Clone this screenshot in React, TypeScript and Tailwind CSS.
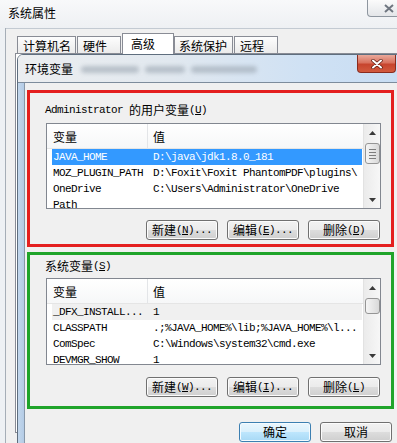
import React from "react";

const mono = "font-['Liberation_Mono',monospace] text-[11px] tracking-[-0.6px] whitespace-pre";

function Key({ k }: { k: string }) {
  return (
    <span className={mono}>
      (<span className="underline underline-offset-[1px]">{k}</span>)
    </span>
  );
}

function Btn({ zh, k, dots, def }: { zh: string; k?: string; dots?: boolean; def?: boolean }) {
  return (
    <div
      className={
        def
          ? "flex h-[20px] w-[72px] items-center justify-center rounded-[3px] border border-[#3c7fb1] bg-[linear-gradient(#eaf6fd_0%,#d9f0fc_50%,#bee6fd_50%,#a7d9f5_100%)] leading-[16px] shadow-[inset_0_0_0_1px_#f4fbff]"
          : "flex h-[20px] w-[72px] items-center justify-center rounded-[3px] border border-[#707070] bg-[linear-gradient(#f2f2f2_0%,#ebebeb_50%,#dddddd_50%,#cfcfcf_100%)] leading-[16px] shadow-[inset_0_0_0_1px_#fcfcfc]"
      }
    >
      <span>{zh}</span>
      {k && <Key k={k} />}
      {dots && <span className={mono}>...</span>}
    </div>
  );
}

function Arrow({ down }: { down?: boolean }) {
  return (
    <div className="flex h-[17px] items-center justify-center">
      <svg width="7" height="4" viewBox="0 0 7 4">
        <path d={down ? "M0 0 L7 0 L3.5 4 Z" : "M0 4 L3.5 0 L7 4 Z"} fill="#3a3a3a" />
      </svg>
    </div>
  );
}

function ScrollBar({ big }: { big?: boolean }) {
  return (
    <div className="flex w-[17px] flex-col border-l border-[#e2e2e2] bg-gradient-to-r from-[#ebebeb] to-[#f7f7f7]">
      <Arrow />
      <div
        className={
          big
            ? "mx-auto mt-[2px] flex h-[21px] w-[15px] flex-col items-center justify-center gap-[2px] rounded-[3px] border border-[#959595] bg-gradient-to-r from-[#f5f5f5] to-[#d9d9d9]"
            : "mx-auto mt-[2px] h-[16px] w-[15px] rounded-[3px] border border-[#959595] bg-gradient-to-r from-[#f5f5f5] to-[#d9d9d9]"
        }
      >
        {big && (
          <>
            <div className="h-px w-[7px] bg-[#7d7d7d]" />
            <div className="h-px w-[7px] bg-[#7d7d7d]" />
            <div className="h-px w-[7px] bg-[#7d7d7d]" />
            <div className="h-px w-[7px] bg-[#7d7d7d]" />
          </>
        )}
      </div>
      <div className="flex-1" />
      <Arrow down />
    </div>
  );
}

type Row = { name: string; value: string };

function ListView({ rows, user }: { rows: Row[]; user?: boolean }) {
  return (
    <div
      className={
        user
          ? "ml-px flex h-[86px] w-[335px] border border-[#828790] bg-white"
          : "ml-px flex h-[87px] w-[335px] border border-[#828790] bg-white"
      }
    >
      <div className="flex-1 overflow-hidden">
        <div className="flex h-[25px] border-b border-[#e5e5e5] bg-gradient-to-b from-white to-[#f6f7f8] pl-[5px] leading-[16px]">
          <div className="w-[96px] border-r border-[#e3e5e8] pl-px pt-[5px]">变量</div>
          <div className="pl-[5px] pt-[5px]">值</div>
        </div>
        {rows.map((r, i) => (
          <div
            key={r.name}
            className={
              user && i === 0
                ? "ml-[5px] flex h-[16px] w-[310px] items-center bg-[#3399ff] text-white"
                : !user && i === 0
                  ? "ml-[5px] flex h-[16px] w-[310px] items-center bg-[#f0f0f0]"
                  : "ml-[5px] flex h-[16px] w-[310px] items-center"
            }
          >
            <div className={"w-[100px] pl-px leading-[16px] " + mono}>{r.name}</div>
            <div className={"pl-px leading-[16px] " + mono}>{r.value}</div>
          </div>
        ))}
      </div>
      <ScrollBar big={user} />
    </div>
  );
}

const userRows: Row[] = [
  { name: "JAVA_HOME", value: "D:\\java\\jdk1.8.0_181" },
  { name: "MOZ_PLUGIN_PATH", value: "D:\\Foxit\\Foxit PhantomPDF\\plugins\\" },
  { name: "OneDrive", value: "C:\\Users\\Administrator\\OneDrive" },
  { name: "Path", value: "" },
];

const sysRows: Row[] = [
  { name: "_DFX_INSTALL...", value: "1" },
  { name: "CLASSPATH", value: ".;%JAVA_HOME%\\lib;%JAVA_HOME%\\l..." },
  { name: "ComSpec", value: "C:\\Windows\\system32\\cmd.exe" },
  { name: "DEVMGR_SHOW", value: "1" },
];

export default function App() {
  return (
    <div className="relative h-[443px] w-[397px] overflow-hidden bg-[#f0f0f0] font-['Noto_Sans_CJK_SC','Noto_Sans',sans-serif] text-[12px] text-black">
      {/* 系统属性 window */}
      <div className="w-[411px]">
        <div className="flex h-[28px] bg-gradient-to-b from-[#f8f9fa] to-[#eef0f3]">
          <div className="pl-[8px] pt-[5px] leading-[16px]">系统属性</div>
          <div className="ml-auto mr-px flex h-[17px] w-[43px] items-center justify-center rounded-b-[4px] border border-t-0 border-[#8e969f] bg-gradient-to-b from-[#fbfbfb] to-[#e4e6e9]">
            <svg width="10" height="9" viewBox="0 0 10 9">
              <path d="M1 1 L9 8 M9 1 L1 8" stroke="#6f7680" strokeWidth="2" />
            </svg>
          </div>
        </div>
        <div className="flex h-[415px]">
          <div className="w-[6px] border-r border-[#a6aeb7] bg-[#eef1f4]" />
          <div className="flex-1 border-t border-[#c3cad2] bg-[#f0f0f0] pl-[9px] pt-[4px]">
            <div className="flex h-[20px] items-end pl-[2px] leading-[16px]">
              <div className="h-[17px] w-[59px] border border-b-0 border-[#898c95] bg-gradient-to-b from-[#fdfdfd] to-[#ebebeb] pl-[5px] pt-px">计算机名</div>
              <div className="ml-px h-[17px] w-[44px] border border-b-0 border-[#898c95] bg-gradient-to-b from-[#fdfdfd] to-[#ebebeb] pl-[5px] pt-px">硬件</div>
              <div className="relative z-10 -mb-px ml-px h-[21px] w-[52px] border border-b-0 border-[#898c95] bg-white pl-[8px] pt-[2px]">高级</div>
              <div className="h-[17px] w-[59px] border border-b-0 border-[#898c95] bg-gradient-to-b from-[#fdfdfd] to-[#ebebeb] pl-[4px] pt-px">系统保护</div>
              <div className="ml-px h-[17px] w-[44px] border border-b-0 border-[#898c95] bg-gradient-to-b from-[#fdfdfd] to-[#ebebeb] pl-[5px] pt-px">远程</div>
            </div>
            <div className="h-[380px] border border-r-0 border-[#898c95] bg-white" />
          </div>
        </div>
      </div>

      {/* 环境变量 dialog, floating over the first window */}
      <div className="absolute left-[17px] top-[54px] flex h-[400px] w-[385px] flex-col overflow-hidden rounded-t-[6px] border border-[#5f6e7e]">
        <div className="flex h-[28px] border-b border-[#7d8c9c] bg-[linear-gradient(90deg,#eceef0_0%,#e1e8ef_40%,#cfe1f4_75%,#c8ddf3_100%)]">
          <div className="pl-[7px] pt-[6px] leading-[16px]">环境变量</div>
          <div className="ml-[8px] mt-[11px] flex gap-[6px]">
            <div className="h-[7px] w-[58px] rounded-full bg-[#9aa5b0] opacity-60 blur-[2px]" />
            <div className="h-[7px] w-[40px] rounded-full bg-[#9aa5b0] opacity-60 blur-[2px]" />
            <div className="h-[7px] w-[66px] rounded-full bg-[#9aa5b0] opacity-60 blur-[2px]" />
          </div>
          <div className="ml-auto mr-[5px] flex h-[18px] w-[39px] items-center justify-center self-start rounded-b-[4px] border border-t-0 border-[#8a2b1e] bg-[linear-gradient(#e9a99b_0%,#d9725e_45%,#c7452e_55%,#d25a3e_100%)]">
            <svg width="12" height="10" viewBox="0 0 12 10">
              <path d="M2 1.5 L10 8.5 M10 1.5 L2 8.5" stroke="#5a1a10" strokeWidth="3.4" strokeLinecap="round" />
              <path d="M2 1.5 L10 8.5 M10 1.5 L2 8.5" stroke="#ffffff" strokeWidth="2" strokeLinecap="round" />
            </svg>
          </div>
        </div>
        <div className="flex flex-1">
          <div className="w-[7px] border-r border-[#8797a8] bg-gradient-to-r from-[#c3d7ec] to-[#b4cce6]" />
          <div className="flex-1 bg-[#f0f0f0] pl-[2px] pt-[7px]">
            <div className="h-[157px] w-[367px] border-[3px] border-[#e41f1f] pl-[15px] pt-[9px]">
              <div className="flex h-[16px] items-center leading-[16px]">
                <span className={mono}>Administrator </span>
                <span>的用户变量</span>
                <Key k="U" />
              </div>
              <div className="mt-[5px]">
                <ListView rows={userRows} user />
              </div>
              <div className="ml-[101px] mt-[11px] flex gap-[9px]">
                <Btn zh="新建" k="N" dots />
                <Btn zh="编辑" k="E" dots />
                <Btn zh="删除" k="D" />
              </div>
            </div>

            <div className="mt-[5px] h-[157px] w-[367px] border-[3px] border-[#1fa42a] pl-[15px] pt-[3px]">
              <div className="flex h-[16px] items-center leading-[16px]">
                <span>系统变量</span>
                <Key k="S" />
              </div>
              <div className="mt-[4px]">
                <ListView rows={sysRows} />
              </div>
              <div className="ml-[101px] mt-[12px] flex gap-[9px]">
                <Btn zh="新建" k="W" dots />
                <Btn zh="编辑" k="I" dots />
                <Btn zh="删除" k="L" />
              </div>
            </div>

            <div className="ml-[212px] mt-[13px] flex gap-[9px]">
              <Btn zh="确定" def />
              <Btn zh="取消" />
            </div>
          </div>
        </div>
      </div>
    </div>
  );
}
